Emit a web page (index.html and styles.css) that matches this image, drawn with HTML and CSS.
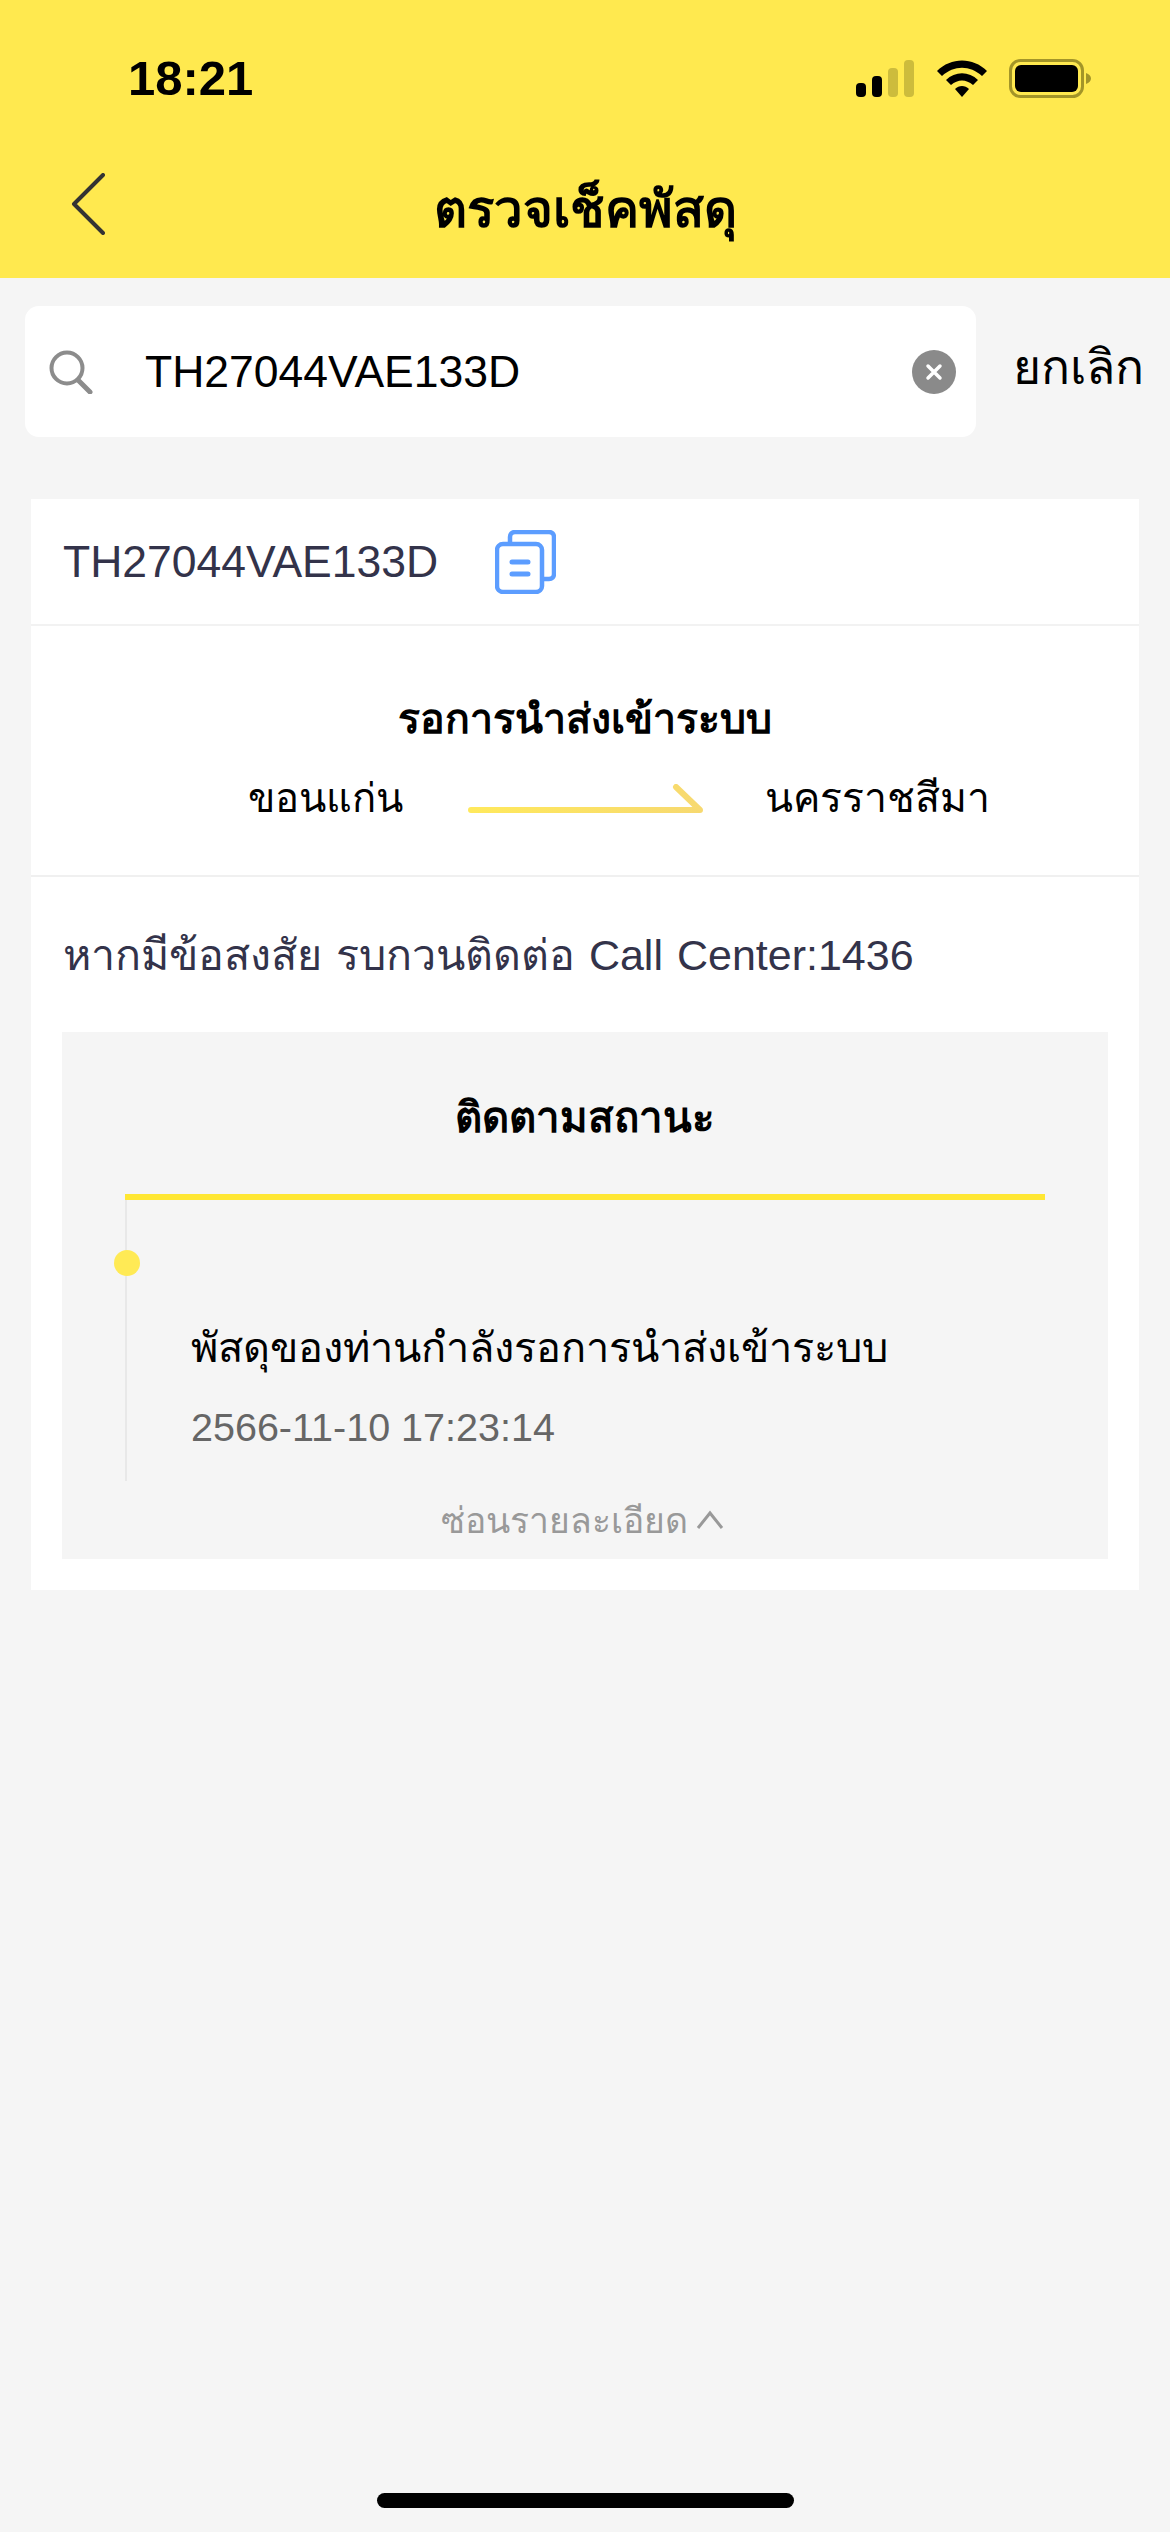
FILE: index.html
```html
<!DOCTYPE html>
<html lang="th">
<head>
    <meta charset="UTF-8">
    <meta name="viewport" content="width=device-width, initial-scale=1.0">
    <title>ตรวจเช็คพัสดุ</title>
    <link rel="stylesheet" href="styles.css">
</head>
<body>
    <div class="page">
        <!-- Barra gialla -->
        <div class="header">
            <div class="status-bar">
                <span class="clock">18:21</span>
                <div class="status-icons">
                    <svg class="signal" width="58" height="37" viewBox="0 0 58 37">
                        <rect x="0" y="23" width="10" height="14" rx="4" fill="#000"/>
                        <rect x="16" y="16" width="10" height="21" rx="4" fill="#000"/>
                        <rect x="32" y="8" width="10" height="29" rx="4" fill="#cdbc3c"/>
                        <rect x="48" y="0" width="10" height="37" rx="4" fill="#cdbc3c"/>
                    </svg>
                    <svg class="wifi" width="50" height="37" viewBox="0 0 50 37">
                        <path d="M0 11 C14 -3 36 -3 50 11 L45 16 C33 5 17 5 5 16 Z" fill="#000"/>
                        <path d="M9 20 C18 11 32 11 41 20 L36 25 C29 19 21 19 14 25 Z" fill="#000"/>
                        <path d="M18 29 C22 25 28 25 32 29 L25 37 Z" fill="#000"/>
                    </svg>
                    <svg class="battery" width="82" height="39" viewBox="0 0 82 39">
                        <rect x="1.5" y="1.5" width="72" height="36" rx="10" fill="none" stroke="#a39528" stroke-width="3"/>
                        <rect x="6" y="6" width="63" height="27" rx="6" fill="#000"/>
                        <path d="M77 14 C80 15 82 17 82 19.500 C82 22 80 24 77 25 Z" fill="#a39528"/>
                    </svg>
                </div>
            </div>
            <div class="nav">
                <svg class="back" width="34" height="62" viewBox="0 0 34 62">
                    <path d="M32 2 L3 31 L32 60" fill="none" stroke="#333" stroke-width="4" stroke-linecap="round" stroke-linejoin="round"/>
                </svg>
                <h1>ตรวจเช็คพัสดุ</h1>
            </div>
        </div>

        <!-- Ricerca -->
        <div class="search-row">
            <div class="search-box">
                <svg class="search-icon" width="44" height="44" viewBox="0 0 44 44">
                    <circle cx="18" cy="18" r="15.500" fill="none" stroke="#8c8c8c" stroke-width="4"/>
                    <path d="M29 30 L41 42" fill="none" stroke="#8c8c8c" stroke-width="5" stroke-linecap="round"/>
                </svg>
                <span class="search-text">TH27044VAE133D</span>
                <svg class="clear" width="44" height="44" viewBox="0 0 44 44">
                    <circle cx="22" cy="22" r="22" fill="#8a8a8a"/>
                    <path d="M16 16 L28 28 M28 16 L16 28" stroke="#fff" stroke-width="3.500" stroke-linecap="round"/>
                </svg>
            </div>
            <span class="cancel">ยกเลิก</span>
        </div>

        <div class="card">
            <div class="code-row">
                <span class="code">TH27044VAE133D</span>
                <svg class="copy" width="61" height="64" viewBox="0 0 61 64">
                    <path d="M15 12 V7 C15 4 17 2 20 2 H54 C57 2 59 4 59 7 V44 C59 47 57 49 54 49 H47" fill="none" stroke="#5c9dff" stroke-width="4.500"/>
                    <rect x="2" y="14" width="45" height="48" rx="6" fill="#fff" stroke="#5c9dff" stroke-width="4.500"/>
                    <path d="M17 32 H33 M17 44 H33" stroke="#5c9dff" stroke-width="5" stroke-linecap="round"/>
                </svg>
            </div>

            <div class="route">
                <div class="route-title">รอการนำส่งเข้าระบบ</div>
                <div class="route-line">
                    <span class="city">ขอนแก่น</span>
                    <svg class="arrow" width="236" height="30" viewBox="0 0 236 30">
                        <defs>
                            <linearGradient id="arrowFill" x1="0" y1="0" x2="1" y2="0">
                                <stop offset="0" stop-color="#ffe95c"/>
                                <stop offset="1" stop-color="#f7d970"/>
                            </linearGradient>
                        </defs>
                        <path d="M3 26 H232 L208 3" fill="none" stroke="url(#arrowFill)" stroke-width="6" stroke-linecap="round" stroke-linejoin="round"/>
                    </svg>
                    <span class="city city-end">นครราชสีมา</span>
                </div>
            </div>

            <div class="help">หากมีข้อสงสัย รบกวนติดต่อ Call Center:1436</div>

            <div class="panel">
                <div class="panel-title">ติดตามสถานะ</div>
                <div class="timeline">
                    <div class="timeline-dot"></div>
                    <div class="timeline-text">พัสดุของท่านกำลังรอการนำส่งเข้าระบบ</div>
                    <div class="timeline-date">2566-11-10 17:23:14</div>
                </div>
                <div class="hide-details">
                    <span>ซ่อนรายละเอียด</span>
                    <svg width="28" height="20" viewBox="0 0 28 20">
                        <path d="M2 18 L14 3 L26 18" fill="none" stroke="#999" stroke-width="3"/>
                    </svg>
                </div>
            </div>
        </div>

        <div class="home-bar"></div>
    </div>
</body>
</html>
```

FILE: styles.css
```css
/* Impostazioni generali */
html, body {
    margin: 0;
    padding: 0;
}

body {
    font-family: "Liberation Sans", "Noto Sans", sans-serif;
    background-color: #f5f5f5;
    color: #000;
}

.page {
    display: flex;
    flex-direction: column;
    height: 2532px;
    overflow: hidden;
}

.header {
    height: 278px;
    background-color: #ffe94f;
}

.status-bar {
    display: flex;
    justify-content: space-between;
    align-items: center;
    height: 58px;
    padding: 49px 79px 0 128px;
}

.clock {
    font-size: 49px;
    font-weight: 700;
    line-height: 58px;
}

.status-icons {
    display: flex;
    align-items: center;
}

.wifi {
    margin-left: 23px;
}

.battery {
    margin-left: 22px;
}

.nav {
    display: flex;
    justify-content: center;
    align-items: center;
    position: relative;
    height: 70px;
    margin-top: 62px;
}

.back {
    position: absolute;
    left: 71px;
    top: 4px;
}

h1 {
    margin: 12px 0 0;
    font-size: 51px;
    font-weight: 700;
    line-height: 70px;
}

/* Ricerca */
.search-row {
    display: flex;
    align-items: center;
    margin-top: 28px;
    padding-left: 25px;
}

.search-box {
    display: flex;
    align-items: center;
    width: 951px;
    height: 131px;
    background-color: #fff;
    border-radius: 14px;
}

.search-icon {
    margin-left: 24px;
}

.search-text {
    margin-left: 52px;
    font-size: 44.500px;
    line-height: 50px;
}

.clear {
    margin-left: auto;
    margin-right: 20px;
}

.cancel {
    margin-left: 37px;
    margin-top: -8px;
    font-size: 48px;
    line-height: 60px;
}

/* Scheda */
.card {
    margin: 62px 31px 0;
    background-color: #fff;
}

.code-row {
    display: flex;
    align-items: center;
    height: 125px;
    padding-left: 32px;
    border-bottom: 2px solid #f2f2f2;
}

.code {
    font-size: 44.500px;
    line-height: 50px;
    color: #33334a;
}

.copy {
    margin-left: 57px;
}

.route {
    height: 249px;
    border-bottom: 2px solid #f0f0f0;
    text-align: center;
}

.route-title {
    padding-top: 63px;
    font-size: 41px;
    font-weight: 700;
    line-height: 60px;
}

.route-line {
    display: flex;
    align-items: flex-end;
    padding: 19px 0 0 217px;
}

.city {
    font-size: 40px;
    line-height: 60px;
}

.city-end {
    font-size: 41px;
}

.arrow {
    margin: 0 61px 14px 65px;
}

.help {
    height: 155px;
    box-sizing: border-box;
    padding: 48px 0 0 32px;
    font-size: 43px;
    word-spacing: 2px;
    line-height: 60px;
    color: #33334a;
}

/* Riquadro stato */
.panel {
    margin: 0 31px 31px;
    height: 527px;
    background-color: #f5f5f5;
}

.panel-title {
    padding-top: 56px;
    height: 106px;
    font-size: 42px;
    font-weight: 700;
    line-height: 60px;
    text-align: center;
}

.timeline {
    position: relative;
    height: 281px;
    margin: 0 63px;
    padding-left: 66px;
    border-top: 6px solid #ffe733;
    background: linear-gradient(#e8e8e8, #e8e8e8) no-repeat left top / 2px 100%;
}

.timeline-dot {
    position: absolute;
    left: -11px;
    top: 50px;
    width: 26px;
    height: 26px;
    border-radius: 50%;
    background-color: #ffea55;
}

.timeline-text {
    padding-top: 118px;
    font-size: 41.500px;
    line-height: 60px;
}

.timeline-date {
    padding-top: 24px;
    font-size: 39.500px;
    line-height: 50px;
    color: #666;
}

.hide-details {
    display: flex;
    justify-content: center;
    align-items: center;
    gap: 8px;
    height: 78px;
    padding-right: 6px;
    font-size: 35.500px;
    color: #999;
}

.home-bar {
    width: 417px;
    height: 15px;
    margin: auto auto 24px;
    border-radius: 8px;
    background-color: #000;
}
```
